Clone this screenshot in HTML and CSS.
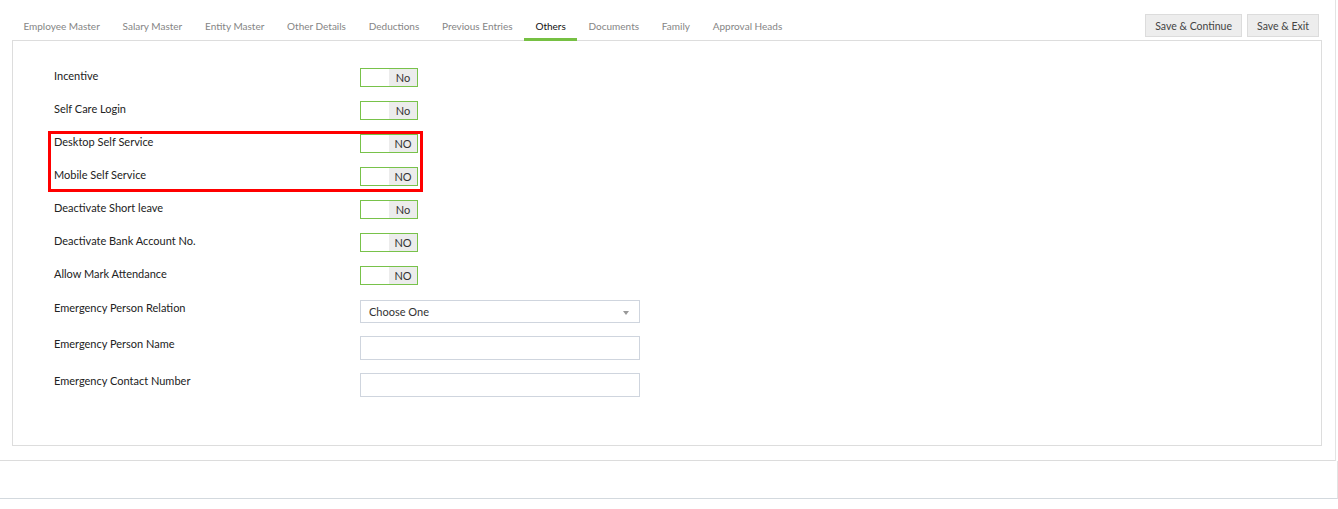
FILE: index.html
```html
<!DOCTYPE html>
<html lang="en">
<head>
	<meta charset="UTF-8">
	<meta name="viewport" content="width=device-width, initial-scale=1.0">
	<title>Employee - Others</title>
	<link rel="stylesheet" href="styles.css">
</head>
<body>
	<div class="page">
		<div class="header">
			<ul class="tabs">
				<li><a href="#">Employee Master</a></li>
				<li><a href="#">Salary Master</a></li>
				<li><a href="#">Entity Master</a></li>
				<li><a href="#">Other Details</a></li>
				<li><a href="#">Deductions</a></li>
				<li><a href="#">Previous Entries</a></li>
				<li class="active"><a href="#">Others</a></li>
				<li><a href="#">Documents</a></li>
				<li><a href="#">Family</a></li>
				<li><a href="#">Approval Heads</a></li>
			</ul>
			<div class="actions">
				<button class="btn">Save &amp; Continue</button>
				<button class="btn">Save &amp; Exit</button>
			</div>
		</div>

		<div class="panel">
			<div class="row">
				<label>Incentive</label>
				<span class="switch"><i></i><b>No</b></span>
			</div>
			<div class="row">
				<label>Self Care Login</label>
				<span class="switch"><i></i><b>No</b></span>
			</div>

			<div class="highlight">
				<div class="row">
					<label>Desktop Self Service</label>
					<span class="switch"><i></i><b>NO</b></span>
				</div>
				<div class="row">
					<label>Mobile Self Service</label>
					<span class="switch"><i></i><b>NO</b></span>
				</div>
			</div>

			<div class="row">
				<label>Deactivate Short leave</label>
				<span class="switch"><i></i><b>No</b></span>
			</div>
			<div class="row">
				<label>Deactivate Bank Account No.</label>
				<span class="switch"><i></i><b>NO</b></span>
			</div>
			<div class="row">
				<label>Allow Mark Attendance</label>
				<span class="switch"><i></i><b>NO</b></span>
			</div>

			<div class="row field first">
				<label>Emergency Person Relation</label>
				<div class="select">
					<span>Choose One</span>
					<span class="caret"></span>
				</div>
			</div>
			<div class="row field">
				<label>Emergency Person Name</label>
				<input type="text" class="input">
			</div>
			<div class="row field">
				<label>Emergency Contact Number</label>
				<input type="text" class="input">
			</div>
		</div>
	</div>
	<div class="footer"></div>
</body>
</html>
```

FILE: styles.css
```css
* {
	margin: 0;
	padding: 0;
	box-sizing: border-box;
}
body {
	font-family: Lato, "Open Sans", sans-serif;
	font-size: 11px;
	color: #333;
	background: #fff;
}

.page {
	width: 1336px;
	padding: 0 13px 14px 12px;
	border-right: 1px solid #e3e3e3;
	border-bottom: 1px solid #dcdcdc;
}

/* tabs + buttons */
.header {
	display: flex;
	justify-content: space-between;
	align-items: flex-start;
	height: 41px;
}
.tabs {
	list-style: none;
	display: flex;
}
.tabs a {
	display: block;
	padding: 19px 11.4px 5px;
	height: 41px;
	line-height: 14px;
	font-size: 10px;
	color: #858585;
	text-decoration: none;
	border-bottom: 3px solid transparent;
}
.tabs .active a {
	color: #111;
	border-bottom-color: #76c043;
}
.actions {
	display: flex;
	gap: 5px;
	padding-top: 14px;
	margin-right: 3px;
}
.btn {
	height: 23px;
	padding: 0 9px;
	font-family: Lato, sans-serif;
	font-size: 10.5px;
	color: #444;
	background: #ededed;
	border: 1px solid #dcdcdc;
	cursor: pointer;
}

/* form panel */
.panel {
	margin-top: -1px;
	border: 1px solid #dddddd;
	padding: 27px 0 48px 41px;
	display: flex;
	flex-direction: column;
	align-items: flex-start;
}
.row {
	display: flex;
	align-items: flex-start;
	margin-bottom: 14px;
}
.row label {
	width: 306px;
	line-height: 16px;
	color: #222;
}
.row.field {
	margin-bottom: 13px;
}
.row.field.first {
	margin-top: 1px;
}
.row.field:last-child {
	margin-bottom: 0;
}

.highlight {
	border: 3px solid #f00;
	padding: 0 2px 3px 3px;
	margin: -3px 0 0 -6px;
}
.highlight .row:last-child {
	margin-bottom: 0;
}
.highlight + .row {
	margin-top: 8px;
}

.switch {
	display: flex;
	width: 58px;
	height: 19px;
	border: 1px solid #78c24a;
}
.switch i {
	width: 28px;
	background: #fff;
}
.switch b {
	flex: 1;
	background: #ececec;
	font-weight: normal;
	color: #333;
	text-align: center;
	line-height: 17px;
}

.select, .input {
	width: 280px;
	height: 24px;
	border: 1px solid #cfd5de;
	background: #fff;
}
.select {
	height: 23px;
	display: flex;
	align-items: center;
	justify-content: space-between;
	padding: 0 10px 0 8px;
	color: #333;
}
.caret {
	width: 0;
	height: 0;
	border-left: 3.5px solid transparent;
	border-right: 3.5px solid transparent;
	border-top: 4px solid #999;
	margin-top: 2px;
}

.footer {
	height: 38px;
	border-right: 1px solid #e3e3e3;
	border-bottom: 1px solid #d3d9de;
}
```
